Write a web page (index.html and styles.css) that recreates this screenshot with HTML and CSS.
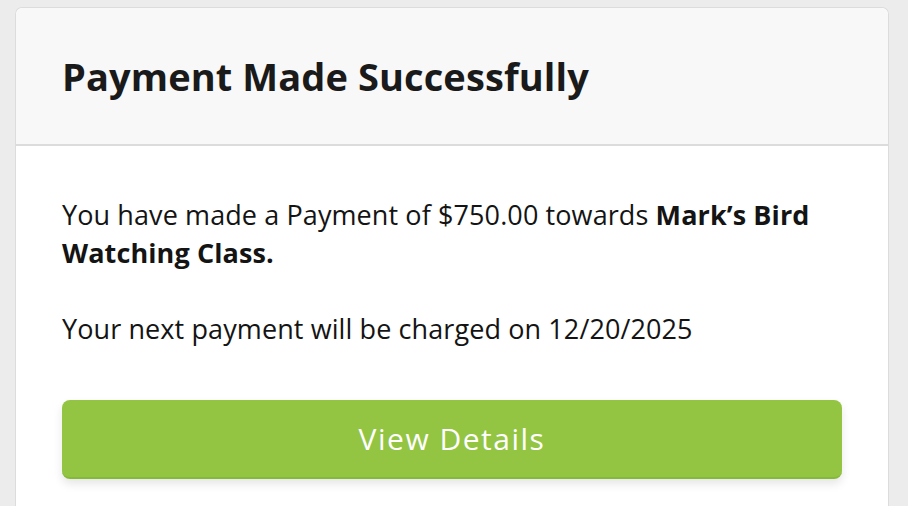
FILE: index.html
```html
<!DOCTYPE html>
<html>
<head>
<meta charset="utf-8">
<link rel="stylesheet" href="styles.css">
</head>
<body>
<div class="card">
  <div class="card-header">
    <h1 class="title">Payment Made Successfully</h1>
  </div>
  <div class="card-body">
    <p class="text">You have made a Payment of $750.00 towards <strong>Mark’s Bird Watching Class.</strong></p>
    <p class="text next">Your next payment will be charged on 12/20/2025</p>
    <button class="btn">View Details</button>
  </div>
</div>
</body>
</html>
```
FILE: styles.css
```css
html, body { margin: 0; padding: 0; }
body {
  background: #ececec;
  padding: 7px 19px 0 15px;
  height: 506px;
  box-sizing: border-box;
  overflow: hidden;
  font-family: "Open Sans", "Lato", sans-serif;
  color: #141414;
}
.card {
  background: #fff;
  border: 1px solid #dcdcdc;
  border-bottom: none;
  border-radius: 7px 7px 0 0;
  height: 520px;
}
.card-header {
  background: #f8f8f8;
  border-bottom: 2px solid #dcdcdc;
  border-radius: 7px 7px 0 0;
  height: 136px;
  display: flex;
  align-items: center;
  padding: 0 46px;
}
.title {
  margin: 0;
  font-size: 38px;
  font-weight: 700;
  letter-spacing: 0.1px;
  color: #1a1a1a;
}
.card-body {
  padding: 50px 46px 0;
}
.text {
  margin: 0;
  font-size: 27px;
  line-height: 38px;
  letter-spacing: 0.1px;
}
.text strong { font-weight: 700; }
.next { margin-top: 38px; }
.btn {
  display: block;
  margin-top: 52px;
  width: 100%;
  height: 79px;
  background: #93c543;
  border: none;
  border-bottom: 2px solid #86b93a;
  border-radius: 8px;
  color: #fff;
  font-family: "Open Sans", "Lato", sans-serif;
  font-size: 30px;
  font-weight: 400;
  letter-spacing: 1.5px;
  box-shadow: 0 5px 10px rgba(0,0,0,0.1);
}
```
